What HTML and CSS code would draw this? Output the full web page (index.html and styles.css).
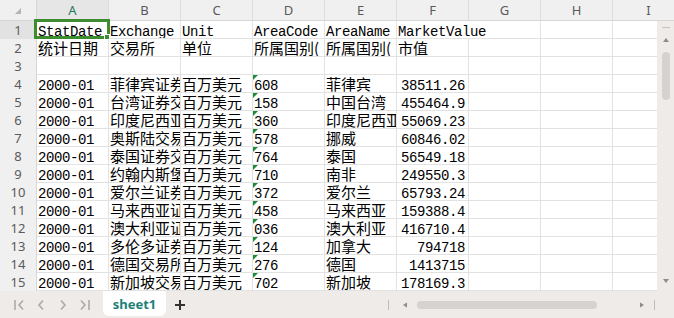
FILE: index.html
```html
<!DOCTYPE html>
<html lang="zh-CN">
<head>
  <meta charset="UTF-8">
  <title>sheet1</title>
  <link rel="stylesheet" href="styles.css">
</head>
<body>
  <div class="sheet">
    <!-- column headers -->
    <div class="row head">
      <div class="corner"><span class="corner-mark"></span></div>
      <div class="col sel">A</div>
      <div class="col">B</div>
      <div class="col">C</div>
      <div class="col">D</div>
      <div class="col">E</div>
      <div class="col">F</div>
      <div class="col">G</div>
      <div class="col">H</div>
      <div class="col">I</div>
    </div>

    <div class="row">
      <div class="rh sel">1</div>
      <div class="cell">StatDate</div>
      <div class="cell">Exchange</div>
      <div class="cell">Unit</div>
      <div class="cell">AreaCode</div>
      <div class="cell">AreaName</div>
      <div class="cell over">MarketValue</div>
      <div class="cell"></div><div class="cell"></div><div class="cell"></div>
    </div>
    <div class="row">
      <div class="rh">2</div>
      <div class="cell zh">统计日期</div>
      <div class="cell zh">交易所</div>
      <div class="cell zh">单位</div>
      <div class="cell zh">所属国别(</div>
      <div class="cell zh">所属国别(</div>
      <div class="cell zh">市值</div>
      <div class="cell"></div><div class="cell"></div><div class="cell"></div>
    </div>
    <div class="row">
      <div class="rh">3</div>
      <div class="cell"></div><div class="cell"></div><div class="cell"></div>
      <div class="cell"></div><div class="cell"></div><div class="cell"></div>
      <div class="cell"></div><div class="cell"></div><div class="cell"></div>
    </div>
    <div class="row">
      <div class="rh">4</div>
      <div class="cell">2000-01</div>
      <div class="cell zh">菲律宾证券交易所</div>
      <div class="cell zh">百万美元</div>
      <div class="cell code">608</div>
      <div class="cell zh">菲律宾</div>
      <div class="cell num">38511.26</div>
      <div class="cell"></div><div class="cell"></div><div class="cell"></div>
    </div>
    <div class="row">
      <div class="rh">5</div>
      <div class="cell">2000-01</div>
      <div class="cell zh">台湾证券交易所</div>
      <div class="cell zh">百万美元</div>
      <div class="cell code">158</div>
      <div class="cell zh">中国台湾</div>
      <div class="cell num">455464.9</div>
      <div class="cell"></div><div class="cell"></div><div class="cell"></div>
    </div>
    <div class="row">
      <div class="rh">6</div>
      <div class="cell">2000-01</div>
      <div class="cell zh">印度尼西亚证券交易所</div>
      <div class="cell zh">百万美元</div>
      <div class="cell code">360</div>
      <div class="cell zh">印度尼西亚</div>
      <div class="cell num">55069.23</div>
      <div class="cell"></div><div class="cell"></div><div class="cell"></div>
    </div>
    <div class="row">
      <div class="rh">7</div>
      <div class="cell">2000-01</div>
      <div class="cell zh">奥斯陆交易所</div>
      <div class="cell zh">百万美元</div>
      <div class="cell code">578</div>
      <div class="cell zh">挪威</div>
      <div class="cell num">60846.02</div>
      <div class="cell"></div><div class="cell"></div><div class="cell"></div>
    </div>
    <div class="row">
      <div class="rh">8</div>
      <div class="cell">2000-01</div>
      <div class="cell zh">泰国证券交易所</div>
      <div class="cell zh">百万美元</div>
      <div class="cell code">764</div>
      <div class="cell zh">泰国</div>
      <div class="cell num">56549.18</div>
      <div class="cell"></div><div class="cell"></div><div class="cell"></div>
    </div>
    <div class="row">
      <div class="rh">9</div>
      <div class="cell">2000-01</div>
      <div class="cell zh">约翰内斯堡证券交易所</div>
      <div class="cell zh">百万美元</div>
      <div class="cell code">710</div>
      <div class="cell zh">南非</div>
      <div class="cell num">249550.3</div>
      <div class="cell"></div><div class="cell"></div><div class="cell"></div>
    </div>
    <div class="row">
      <div class="rh">10</div>
      <div class="cell">2000-01</div>
      <div class="cell zh">爱尔兰证券交易所</div>
      <div class="cell zh">百万美元</div>
      <div class="cell code">372</div>
      <div class="cell zh">爱尔兰</div>
      <div class="cell num">65793.24</div>
      <div class="cell"></div><div class="cell"></div><div class="cell"></div>
    </div>
    <div class="row">
      <div class="rh">11</div>
      <div class="cell">2000-01</div>
      <div class="cell zh">马来西亚证券交易所</div>
      <div class="cell zh">百万美元</div>
      <div class="cell code">458</div>
      <div class="cell zh">马来西亚</div>
      <div class="cell num">159388.4</div>
      <div class="cell"></div><div class="cell"></div><div class="cell"></div>
    </div>
    <div class="row">
      <div class="rh">12</div>
      <div class="cell">2000-01</div>
      <div class="cell zh">澳大利亚证券交易所</div>
      <div class="cell zh">百万美元</div>
      <div class="cell code">036</div>
      <div class="cell zh">澳大利亚</div>
      <div class="cell num">416710.4</div>
      <div class="cell"></div><div class="cell"></div><div class="cell"></div>
    </div>
    <div class="row">
      <div class="rh">13</div>
      <div class="cell">2000-01</div>
      <div class="cell zh">多伦多证券交易所</div>
      <div class="cell zh">百万美元</div>
      <div class="cell code">124</div>
      <div class="cell zh">加拿大</div>
      <div class="cell num">794718</div>
      <div class="cell"></div><div class="cell"></div><div class="cell"></div>
    </div>
    <div class="row">
      <div class="rh">14</div>
      <div class="cell">2000-01</div>
      <div class="cell zh">德国交易所</div>
      <div class="cell zh">百万美元</div>
      <div class="cell code">276</div>
      <div class="cell zh">德国</div>
      <div class="cell num">1413715</div>
      <div class="cell"></div><div class="cell"></div><div class="cell"></div>
    </div>
    <div class="row">
      <div class="rh">15</div>
      <div class="cell">2000-01</div>
      <div class="cell zh">新加坡交易所</div>
      <div class="cell zh">百万美元</div>
      <div class="cell code">702</div>
      <div class="cell zh">新加坡</div>
      <div class="cell num">178169.3</div>
      <div class="cell"></div><div class="cell"></div><div class="cell"></div>
    </div>

    <!-- active cell A1 -->
    <div class="selection"><span class="handle"></span></div>

    <!-- vertical scrollbar -->
    <div class="vscroll">
      <svg width="17" height="270" viewBox="0 0 17 270">
        <line x1="5" y1="6.5" x2="13" y2="6.5" stroke="#c4c1be" stroke-width="1"/>
        <polygon points="9,17 12,21 6,21" fill="#8c8c8c"/>
        <rect x="5" y="31" width="8" height="48" rx="4" fill="#d6d2cf"/>
        <polygon points="6,258 12,258 9,262" fill="#8c8c8c"/>
      </svg>
    </div>
  </div>

  <!-- sheet tabs + horizontal scrollbar -->
  <div class="bar">
    <svg class="nav" width="103" height="27" viewBox="0 0 103 27">
      <g fill="none" stroke="#ababab" stroke-width="1.6">
        <line x1="15" y1="9" x2="15" y2="19"/>
        <polyline points="23,9.5 19,14 23,18.5"/>
        <polyline points="43,9.5 39,14 43,18.5"/>
        <polyline points="61,9.5 65,14 61,18.5"/>
        <polyline points="81,9.5 85,14 81,18.5"/>
        <line x1="89" y1="9" x2="89" y2="19"/>
      </g>
    </svg>
    <div class="tab">sheet1</div>
    <svg class="add" width="12" height="12" viewBox="0 0 12 12">
      <path d="M6 1v10M1 6h10" stroke="#333" stroke-width="2"/>
    </svg>
    <svg class="hscroll" width="288" height="27" viewBox="0 0 288 27">
      <line x1="2.5" y1="9" x2="2.5" y2="19" stroke="#bdbdbd"/>
      <polygon points="17,14 21,11.5 21,16.5" fill="#8c8c8c"/>
      <rect x="31" y="10" width="180" height="8" rx="4" fill="#d6d2cf"/>
      <polygon points="254,11.5 258,14 254,16.5" fill="#8c8c8c"/>
      <line x1="268.5" y1="9" x2="268.5" y2="19" stroke="#bdbdbd"/>
    </svg>
  </div>
</body>
</html>
```

FILE: styles.css
```css
body {
  margin: 0;
  width: 674px;
  height: 318px;
  overflow: hidden;
  background: #fff;
  color: #000;
  font-family: "Liberation Mono", "Noto Sans CJK SC", monospace;
}
.sheet {
  position: relative;
  height: 291px;
  overflow: hidden;
}
.row {
  display: grid;
  grid-template-columns: 37px repeat(9, 72px);
  height: 18px;
}
.row.head {
  height: 21px;
}

/* headers */
.corner, .col, .rh {
  box-sizing: border-box;
  display: flex;
  align-items: center;
  justify-content: center;
  background: #f0f0f0;
  font-family: "Noto Sans", sans-serif;
  font-size: 13px;
  color: #5a5a5a;
}
.corner {
  position: relative;
  border-right: 1px solid #d6d6d6;
  border-bottom: 1px solid #d6d6d6;
}
.corner-mark {
  position: absolute;
  left: 15px;
  top: 8px;
  border-style: solid;
  border-width: 0 0 6px 6px;
  border-color: transparent transparent #b4b4b4 transparent;
}
.col {
  border-right: 1px solid #dcdcdc;
  border-bottom: 1px solid #d6d6d6;
  padding-bottom: 1px;
}
.rh {
  border-right: 1px solid #d6d6d6;
  border-bottom: 1px solid #e0e0e0;
}
.col.sel {
  background: #e6e6e6;
  color: #1f7a5a;
}
.rh.sel {
  background: #e2e2e2;
}

/* cells */
.cell {
  position: relative;
  box-sizing: border-box;
  height: 18px;
  padding: 2px 0 0 1px;
  border-right: 1px solid #e2e2e2;
  border-bottom: 1px solid #e2e2e2;
  font-size: 14px;
  line-height: 18px;
  letter-spacing: -0.4px;
  white-space: nowrap;
  overflow: hidden;
}
.cell.zh {
  padding-top: 1px;
  font-family: "Noto Sans CJK SC", sans-serif;
  font-size: 15px;
  line-height: 16px;
  letter-spacing: 0;
}
.cell.over {
  overflow: visible;
  border-right-color: transparent;
}
.cell.num {
  text-align: right;
  padding-right: 3px;
}
.cell.code::before {
  content: "";
  position: absolute;
  left: 0;
  top: 0;
  border-style: solid;
  border-width: 5px 5px 0 0;
  border-color: #1f8a3a transparent transparent transparent;
}

.selection {
  position: absolute;
  z-index: 5;
  left: 34px;
  top: 19px;
  width: 76px;
  height: 20px;
  box-sizing: border-box;
  border: 3px solid #3d8c2f;
}
.handle {
  position: absolute;
  right: -3px;
  bottom: -4px;
  width: 4px;
  height: 4px;
  background: #3d8c2f;
  border: 1px solid #fff;
}

.vscroll {
  position: absolute;
  z-index: 6;
  right: 0;
  top: 21px;
  width: 17px;
  height: 270px;
  background: #eeebe8;
}
.vscroll svg {
  display: block;
}

/* bottom bar */
.bar {
  display: flex;
  align-items: flex-start;
  height: 27px;
  background: #eeebe8;
}
.nav {
  flex: none;
}
.tab {
  width: 63px;
  height: 25px;
  display: flex;
  align-items: center;
  justify-content: center;
  background: #fff;
  border-radius: 0 0 6px 6px;
  font-family: "Noto Sans", sans-serif;
  font-size: 13px;
  font-weight: bold;
  color: #1d7f79;
}
.add {
  margin: 8px 0 0 8px;
}
.hscroll {
  margin-left: auto;
}
```
